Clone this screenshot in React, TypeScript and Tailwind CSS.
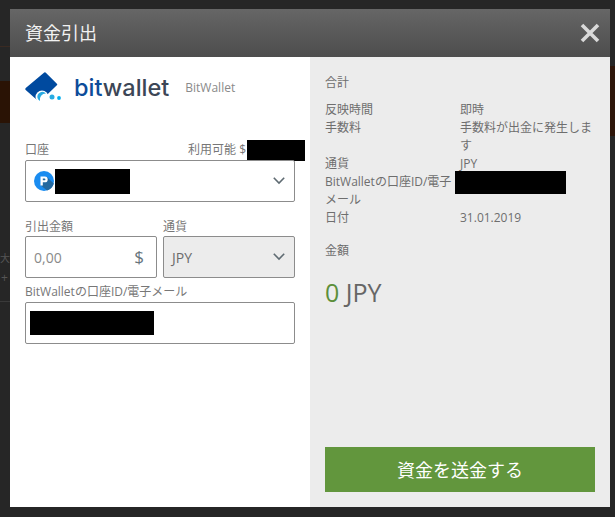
import React from "react";

const font = "font-['Open_Sans','Noto_Sans_CJK_JP',sans-serif]";

const Chevron = () => (
  <svg width="12" height="8" viewBox="0 0 12 8" fill="none" className="mr-px shrink-0">
    <path d="M.8.8 6 6 11.200.8" stroke="#5f6b72" strokeWidth="1.600" />
  </svg>
);

const BitwalletMark = () => (
  <svg width="37" height="31" viewBox="0 0 37 31">
    <path
      d="M20 1.500 31 12.500 14.500 28.500 1.500 17Z"
      fill="#004a9f"
      stroke="#004a9f"
      strokeWidth="2.400"
      strokeLinejoin="round"
    />
    <circle cx="17" cy="25" r="6.500" fill="#fff" />
    <path d="M12.500 26a5 5 0 0 1 8.500-4.500 6 6 0 0 0-6 7.500 5 5 0 0 1-2.500-3Z" fill="#29abe2" />
    <circle cx="27" cy="25" r="2.500" fill="#29abe2" />
    <circle cx="34" cy="26" r="1.900" fill="#00aeef" />
  </svg>
);

const PayIcon = () => (
  <svg width="20" height="20" viewBox="0 0 20 20">
    <circle cx="10" cy="10" r="10" fill="#1a8cf0" />
    <path d="M7 14.500V6h6l3 3 3.800 3.500A10 10 0 0 1 13 19.400Z" fill="#23689f" />
    <path
      d="M6.500 5.500h4.300a2.900 2.900 0 0 1 0 5.800H8.800v3.200H6.500Zm2.300 2v1.800h1.700a.9.9 0 0 0 0-1.800Z"
      fill="#fff"
    />
  </svg>
);

const Field = ({ children, className = "" }: { children: React.ReactNode; className?: string }) => (
  <div className={`flex h-[42px] items-center rounded-[2px] border border-[#8c8c8c] ${className}`}>
    {children}
  </div>
);

const summaryRows = [
  { label: "反映時間", value: "即時" },
  { label: "手数料", value: "手数料が出金に発生します" },
  { label: "通貨", value: "JPY" },
  { label: "BitWalletの口座ID/電子メール", value: "", hidden: true },
  { label: "日付", value: "31.01.2019" },
];

const App = () => {
  return (
    <div className={`${font} relative h-[517px] w-[615px] overflow-hidden bg-[#262626] pl-[10px] pt-[9px]`}>
      {/* page behind the overlay */}
      <div className="absolute left-0 top-[46px] h-px w-[10px] bg-[#3a2a22]" />
      <div className="absolute left-0 top-[81px] h-[42px] w-[10px] bg-[#2a1305]" />
      <span className="absolute left-0 top-[252px] text-[10px] leading-[12px] text-[#555555]">大</span>
      <span className="absolute left-[1px] top-[270px] text-[12px] leading-[16px] text-[#555555]">+</span>
      <div className="absolute left-0 top-[301px] h-px w-[10px] bg-[#3a3a3a]" />
      <div className="absolute left-[610px] top-[66px] h-[70px] w-[5px] bg-[#2e1509]" />

      <div className="relative flex h-[498px] w-[600px] flex-col">
        {/* Header */}
        <div className="flex h-[48px] shrink-0 items-center justify-between bg-gradient-to-b from-[#666666] to-[#4d4d4d] pl-[15px] pr-[10px]">
          <span className="text-[18px] leading-none text-[#f2f2f2]">資金引出</span>
          <svg width="20" height="20" viewBox="0 0 20 20" fill="none">
            <path d="M2 2l16 16M18 2 2 18" stroke="#d9d9d9" strokeWidth="3.600" />
          </svg>
        </div>

        <div className="flex min-h-0 flex-1">
          {/* Left: form */}
          <div className="flex w-[300px] flex-col bg-white px-[15px] text-[12px] text-[#777777]">
            <div className="mt-[15px] flex h-[31px] items-center">
              <BitwalletMark />
              <span className="ml-[12px] font-['Inter',sans-serif] text-[23.500px] font-medium leading-none text-[#3c4656]">
                <span className="text-[#0d4c9a]">bit</span>wallet
              </span>
              <span className="ml-[16px] text-[12px] text-[#8a8a8a]">BitWallet</span>
            </div>

            <div className="mr-[-10px] mt-[38px] flex h-[18px] items-center justify-between">
              <span>口座</span>
              <span className="flex items-center">
                利用可能 $
                <span className="ml-px h-[21px] w-[58px] bg-black" />
              </span>
            </div>
            <Field className="mt-px px-[8px]">
              <PayIcon />
              <span className="ml-px h-[25px] w-[75px] bg-black" />
              <span className="flex-1" />
              <Chevron />
            </Field>

            <div className="mt-[16px] flex gap-[6px]">
              <div className="w-[132px]">
                <div className="h-[18px] leading-[18px]">引出金額</div>
                <Field className="pl-[8px] pr-[12px] text-[14px] text-[#8a8a8a]">
                  <span className="flex-1">0,00</span>
                  <span className="text-[17px] text-[#66747c]">$</span>
                </Field>
              </div>
              <div className="w-[132px]">
                <div className="h-[18px] leading-[18px]">通貨</div>
                <Field className="bg-[#ececec] px-[8px] text-[14px] text-[#6b6b6b]">
                  <span className="flex-1">JPY</span>
                  <Chevron />
                </Field>
              </div>
            </div>

            <div className="mt-[5px] h-[18px] leading-[18px]">BitWalletの口座ID/電子メール</div>
            <Field className="mt-px pl-[4px]">
              <span className="h-[24px] w-[124px] bg-black" />
            </Field>
          </div>

          {/* Right: summary */}
          <div className="flex w-[300px] flex-col bg-[#ececec] px-[15px] pb-[15px] text-[12px] leading-[18px] text-[#6e6e6e]">
            <div className="mt-[17px]">合計</div>
            <div className="mt-[9px]">
              {summaryRows.map((row) => (
                <div key={row.label} className="flex">
                  <div className="w-[135px] shrink-0">{row.label}</div>
                  <div className="relative w-[135px]">
                    {row.value}
                    {row.hidden && (
                      <span className="absolute left-[-5px] top-[-2px] h-[23px] w-[111px] bg-black" />
                    )}
                  </div>
                </div>
              ))}
            </div>
            <div className="mt-[15px]">金額</div>
            <div className="mt-[16px] text-[25px] leading-[32px] text-[#666666]">
              <span className="text-[#5c8f3a]">0</span> JPY
            </div>
            <div className="mt-auto flex h-[45px] items-center justify-center bg-[#62963d] text-[18px] text-white">
              資金を送金する
            </div>
          </div>
        </div>
      </div>
    </div>
  );
};

export default App;
